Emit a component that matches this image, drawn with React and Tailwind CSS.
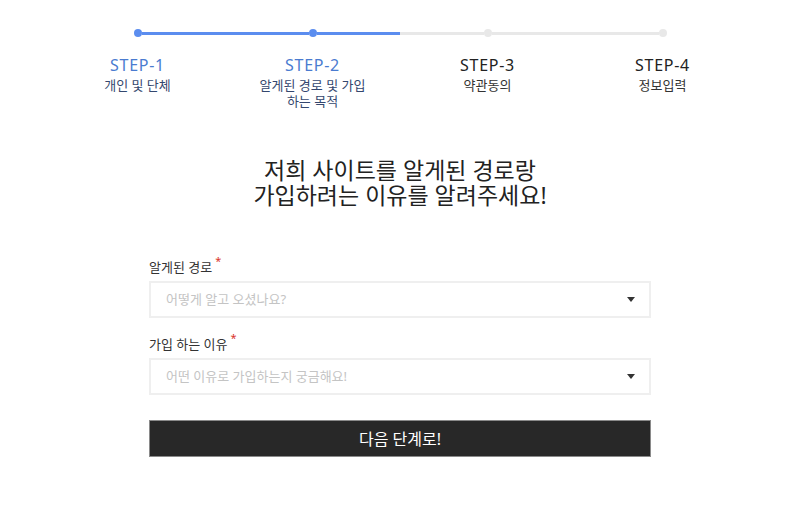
const steps = [
  { label: "STEP-1", desc: ["개인 및 단체"], active: true, left: null, right: "blue" },
  { label: "STEP-2", desc: ["알게된 경로 및 가입", "하는 목적"], active: true, left: "blue", right: "blue" },
  { label: "STEP-3", desc: ["약관동의"], active: false, left: "gray", right: "gray" },
  { label: "STEP-4", desc: ["정보입력"], active: false, left: "gray", right: null },
];

const Segment = ({ color }) => {
  if (!color) return <div className="flex-1" />;
  return <div className={color === "blue" ? "flex-1 h-[3px] bg-[#5b8def]" : "flex-1 h-[3px] bg-[#e8e8e8]"} />;
};

const Caret = () => (
  <svg width="8" height="5" viewBox="0 0 8 5" className="text-[#333]">
    <path d="M0 0h8L4 5z" fill="currentColor" />
  </svg>
);

const SelectBox = ({ placeholder }) => (
  <div className="h-[37px] border-2 border-[#efefef] flex items-center justify-between pl-[15px] pr-[14px]">
    <span className="text-[13px] text-[#c4c4c4]">{placeholder}</span>
    <Caret />
  </div>
);

const Label = ({ children }) => (
  <div className="flex items-start text-[13px] text-[#333] leading-5">
    <span>{children}</span>
    <span className="text-[#d9352b] text-[11px] leading-none ml-[3px] -mt-[2px]">*</span>
  </div>
);

const App = () => {
  return (
    <div
      className="w-[800px] h-[510px] bg-white"
      style={{ fontFamily: '"Noto Sans", "Noto Sans CJK KR", sans-serif' }}
    >
      {/* Stepper */}
      <div className="w-[700px] mx-auto pt-[29px] grid grid-cols-4">
        {steps.map((s) => (
          <div key={s.label} className="flex flex-col items-center">
            <div className="w-full h-2 flex items-center">
              <Segment color={s.left} />
              <div className={s.active ? "w-2 h-2 rounded-full bg-[#5b8def]" : "w-2 h-2 rounded-full bg-[#e8e8e8]"} />
              <Segment color={s.right} />
            </div>
            <div
              className={
                s.active
                  ? "mt-[18px] text-[16px] leading-5 tracking-[0.7px] text-[#4a7bd0]"
                  : "mt-[18px] text-[16px] leading-5 tracking-[0.7px] text-[#222]"
              }
            >
              {s.label}
            </div>
            <div
              className={
                s.active
                  ? "mt-[2px] text-[13px] leading-4 text-center text-[#34476e]"
                  : "mt-[2px] text-[13px] leading-4 text-center text-[#333]"
              }
            >
              {s.desc.map((d) => (
                <div key={d}>{d}</div>
              ))}
            </div>
          </div>
        ))}
      </div>

      {/* Heading */}
      <div className="mt-[49px] text-center text-[23px] leading-[25px] text-[#222]">
        <div>저희 사이트를 알게된 경로랑</div>
        <div>가입하려는 이유를 알려주세요!</div>
      </div>

      {/* Form */}
      <div className="w-[502px] mx-auto mt-[49px]">
        <Label>알게된 경로</Label>
        <div className="mt-[4px]">
          <SelectBox placeholder="어떻게 알고 오셨나요?" />
        </div>

        <div className="mt-[16px]">
          <Label>가입 하는 이유</Label>
        </div>
        <div className="mt-[4px]">
          <SelectBox placeholder="어떤 이유로 가입하는지 궁금해요!" />
        </div>

        <button className="mt-[25px] w-full h-[37px] bg-[#282828] border border-[#8a8a8a] text-white text-[16px]">
          다음 단계로!
        </button>
      </div>
    </div>
  );
};

export default App;
